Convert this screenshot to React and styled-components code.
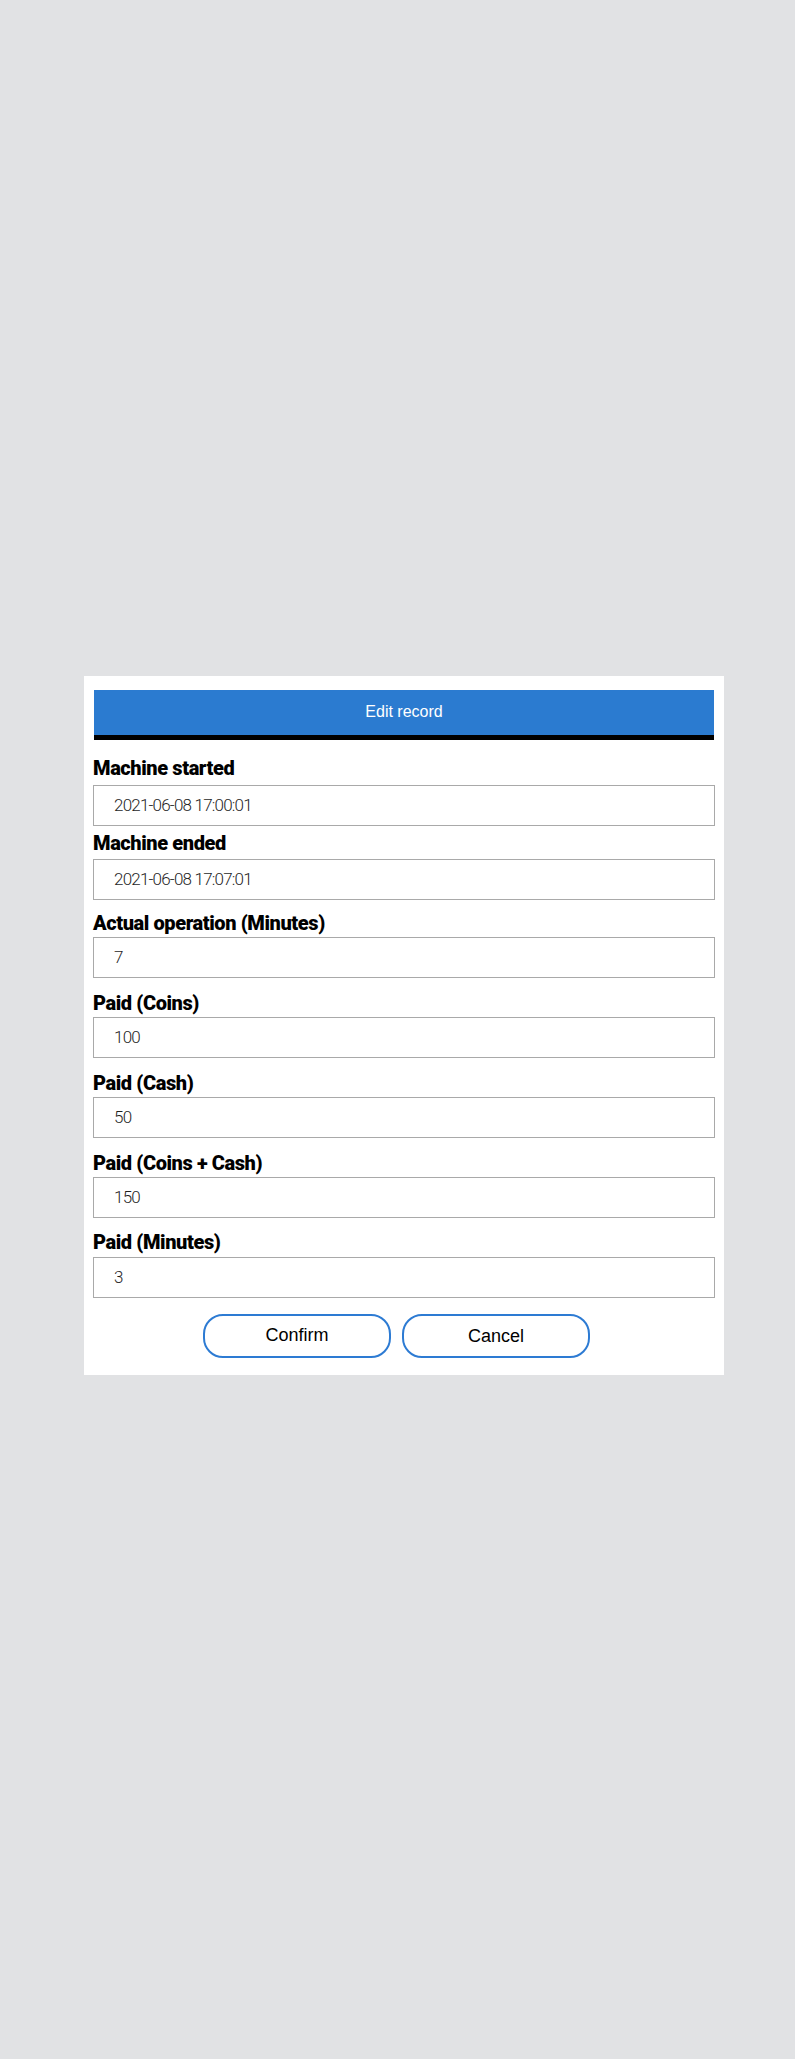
import React from 'react';
import styled, { createGlobalStyle } from 'styled-components';

const GlobalStyle = createGlobalStyle`
  html, body {
    margin: 0;
    padding: 0;
    background: #e1e2e4;
  }
`;

const Overlay = styled.div`
  min-height: 100vh;
  box-sizing: border-box;
  display: flex;
  align-items: center;
  justify-content: center;
  padding: 0 0 9px 13px;
`;

const Modal = styled.section`
  width: 640px;
  box-sizing: border-box;
  background: #ffffff;
  padding: 14px 9px 17px;
  display: flex;
  flex-direction: column;
`;

const Header = styled.header`
  margin: 0 1px 16px;
  height: 45px;
  background: #2b7bd0;
  border-bottom: 5px solid #000000;
  display: flex;
  align-items: center;
  justify-content: center;
  color: #ffffff;
  font-family: "Liberation Sans", Arial, sans-serif;
  font-size: 16px;
`;

const Label = styled.label`
  display: block;
  margin: ${p => p.$top}px 0 ${p => p.$below}px;
  font-family: Roboto, "Noto Sans", sans-serif;
  font-weight: 900;
  font-size: 20px;
  line-height: 24px;
  letter-spacing: -0.4px;
  color: #000000;
`;

const Input = styled.input`
  display: block;
  width: 100%;
  height: 41px;
  box-sizing: border-box;
  margin: 0;
  border: 1px solid #a9a9a9;
  border-radius: 0;
  padding: 0 20px;
  background: #ffffff;
  font-family: Roboto, "Noto Sans", sans-serif;
  font-weight: 300;
  font-size: 17px;
  letter-spacing: -0.8px;
  color: #1f1f1f;
  outline: none;
`;

const ButtonRow = styled.div`
  display: flex;
  justify-content: center;
  gap: 11px;
  margin-top: 16px;
  padding-right: 15px;
`;

const Button = styled.button`
  width: 188px;
  height: 44px;
  box-sizing: border-box;
  border: 2px solid #2d7bd3;
  border-radius: 20px;
  background: #ffffff;
  padding: ${p => (p.$nudge ? '2px 0 0' : '0')};
  font-family: "Liberation Sans", Arial, sans-serif;
  font-size: 18px;
  color: #000000;
  cursor: pointer;
`;

const fields = [
  { label: 'Machine started', value: '2021-06-08 17:00:01', top: 0, below: 5 },
  { label: 'Machine ended', value: '2021-06-08 17:07:01', top: 5, below: 4 },
  { label: 'Actual operation (Minutes)', value: '7', top: 11, below: 2 },
  { label: 'Paid (Coins)', value: '100', top: 13, below: 2 },
  { label: 'Paid (Cash)', value: '50', top: 13, below: 2 },
  { label: 'Paid (Coins + Cash)', value: '150', top: 13, below: 2 },
  { label: 'Paid (Minutes)', value: '3', top: 12, below: 3 },
];

export default function App() {
  return (
    <>
      <GlobalStyle />
      <Overlay>
        <Modal>
          <Header>Edit record</Header>
          {fields.map(f => (
            <div key={f.label}>
              <Label $top={f.top} $below={f.below}>{f.label}</Label>
              <Input readOnly value={f.value} />
            </div>
          ))}
          <ButtonRow>
            <Button>Confirm</Button>
            <Button $nudge>Cancel</Button>
          </ButtonRow>
        </Modal>
      </Overlay>
    </>
  );
}
